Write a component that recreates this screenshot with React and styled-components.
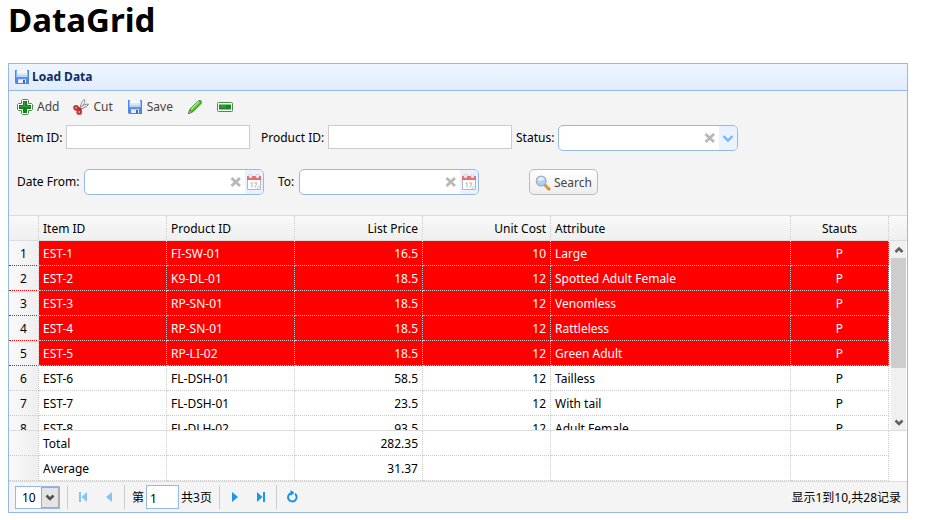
import React from "react";
import styled, { createGlobalStyle, css } from "styled-components";

const FONT = '"Noto Sans", "Noto Sans CJK SC", sans-serif';

const GlobalStyle = createGlobalStyle`
  * { box-sizing: border-box; }
  body {
    margin: 0 8px;
    background: #fff;
    color: #000;
    font: 12px/16px ${FONT};
  }
  button, input, select { font: inherit; color: inherit; }
`;

/* ---------- layout ---------- */

const Title = styled.h1`
  margin: 0 0 24px;
  font-size: 33px;
  line-height: 39px;
  font-weight: 700;
`;

const Panel = styled.section`
  max-width: 900px;
  border: 1px solid #95b8e7;
  background: #fff;
`;

const PanelHeader = styled.header`
  display: flex;
  align-items: center;
  gap: 2px;
  height: 27px;
  padding: 0 5px;
  border-bottom: 1px solid #95b8e7;
  background: linear-gradient(to bottom, #eff5ff 0%, #e0ecff 100%);
`;

const PanelTitle = styled.h2`
  margin: 0;
  font-size: 12px;
  line-height: 16px;
  font-weight: 700;
  color: #0e2d5f;
`;

const ToolArea = styled.div`
  height: 125px;
  padding: 4px 8px 0;
  background: #f4f4f4;
  border-bottom: 1px solid #ddd;
`;

const ButtonBar = styled.div`
  display: flex;
  align-items: center;
  gap: 14px;
  height: 24px;
  margin-bottom: 6px;
`;

const PlainButton = styled.button`
  display: inline-flex;
  align-items: center;
  gap: 4px;
  height: 24px;
  padding: 0;
  border: 0;
  background: none;
  color: #444;
  cursor: pointer;
`;

const FieldRow = styled.div`
  display: flex;
  align-items: center;
  height: 26px;
  margin-bottom: ${(p) => (p.$spaced ? "18px" : "0")};
`;

const Label = styled.label`
  flex: none;
  width: ${(p) => p.$width};
  margin-left: ${(p) => p.$gap || "0"};
  white-space: nowrap;
`;

const TextBox = styled.input`
  width: 184px;
  height: 24px;
  margin-bottom: 2px;
  padding: 2px 4px;
  border: 1px solid #ccc;
  background: #fff;
`;

const Combo = styled.div`
  display: flex;
  align-items: stretch;
  width: 180px;
  height: 26px;
  border: 1px solid #95b8e7;
  border-radius: 5px;
  background: #fff;
  overflow: hidden;
`;

const ComboInput = styled.input`
  flex: 1;
  min-width: 0;
  padding: 0 4px;
  border: 0;
  outline: 0;
  background: transparent;
`;

const ComboButton = styled.button`
  display: grid;
  place-items: center;
  width: 18px;
  padding: 0;
  border: 0;
  background: ${(p) => (p.$tinted ? "#e0ecff" : "transparent")};
  opacity: ${(p) => (p.$tinted ? 0.65 : 1)};
`;

const SearchButton = styled.button`
  display: inline-flex;
  align-items: center;
  gap: 3px;
  height: 26px;
  margin-left: 50px;
  padding: 1px 5px 0;
  border: 1px solid #bbb;
  border-radius: 5px;
  background: linear-gradient(to bottom, #fff 0%, #eee 100%);
  color: #444;
`;

/* ---------- grid ---------- */

const Split = styled.div`
  display: grid;
  grid-template-columns: minmax(0, 1fr) 18px;
`;

const HeadBand = styled(Split)`
  border-bottom: 1px solid #ddd;
  background: linear-gradient(to bottom, #f9f9f9 0%, #efefef 100%);
`;

const BodyBand = styled(Split)`
  height: 189px;
`;

const FootBand = styled(Split)`
  border-top: 1px solid #ddd;
`;

const Viewport = styled.div`
  overflow: hidden;
`;

const Table = styled.table`
  width: 100%;
  table-layout: fixed;
  border-collapse: separate;
  border-spacing: 0;
`;

const cell = css`
  height: ${(p) => (p.$head ? "24px" : "25px")};
  padding: 2px 4px 0;
  border-right: 1px dotted #ccc;
  text-align: ${(p) => p.$align || "left"};
  font-weight: 400;
  white-space: nowrap;
`;

const HeadCell = styled.th`
  ${cell}
`;

const Cell = styled.td`
  ${cell}
  border-bottom: 1px dotted #ccc;
`;

const NumberCell = styled.th`
  ${cell}
  padding: 2px 0 0;
  border-bottom: 1px dotted #ccc;
  background: linear-gradient(to right, #f9f9f9 0%, #efefef 100%);
`;

const Row = styled.tr`
  ${(p) =>
    p.$marked &&
    css`
      background: #f00;
      ${Cell} {
        color: #fff;
      }
      ${NumberCell} {
        border-bottom-color: #f00;
      }
    `}
`;

const ScrollBar = styled.div`
  display: flex;
  flex-direction: column;
  margin: 0 1px;
  border-left: 1px solid #fff;
  background: #f0f0f0;
`;

const ScrollButton = styled.button`
  display: grid;
  place-items: center;
  height: 17px;
  padding: 0;
  border: 0;
  background: none;
`;

const ScrollTrack = styled.div`
  flex: 1;
`;

const ScrollThumb = styled.div`
  height: 71%;
  background: #cdcdcd;
`;

/* ---------- pager ---------- */

const Pager = styled.footer`
  display: flex;
  align-items: center;
  height: 31px;
  padding: 0 6px;
  border-top: 1px solid #ddd;
  background: #f4f4f4;
`;

const SizeBox = styled.div`
  display: grid;
  grid-template-columns: 1fr 18px;
  width: 45px;
  height: 23px;
  margin-right: 5px;
  border: 1px solid #95b8e7;
  background: #fff;
`;

const SizeSelect = styled.select`
  grid-area: 1 / 1 / 2 / 3;
  width: 100%;
  padding: 2px 6px 0;
  border: 0;
  background: transparent;
  appearance: none;
`;

const SizeArrow = styled.span`
  grid-area: 1 / 2 / 2 / 3;
  display: grid;
  place-items: center;
  border: 1px solid #aaa;
  background: #e4e4e4;
  pointer-events: none;
`;

const Divider = styled.span`
  width: 1px;
  height: 24px;
  margin: 0 2px;
  background: #ccc;
`;

const PagerButton = styled.button`
  display: grid;
  place-items: center;
  width: 26px;
  height: 24px;
  padding: 0;
  border: 0;
  background: none;
  opacity: ${(p) => (p.disabled ? 0.5 : 1)};
`;

const PageGroup = styled.div`
  display: flex;
  align-items: center;
  padding: 0 5px;
`;

const PagerText = styled.span`
  padding-top: 2px;
`;

const PageInput = styled.input`
  width: 33px;
  height: 24px;
  margin: 0 2px;
  padding: 2px 3px 0;
  border: 1px solid #95b8e7;
  background: #fff;
`;

const PageInfo = styled(PagerText)`
  margin-left: auto;
`;

/* ---------- icons ---------- */

const Svg = styled.svg`
  display: block;
  flex: none;
`;

const Icon = ({ children, size = 16 }) => (
  <Svg width={size} height={size} viewBox="0 0 16 16" aria-hidden="true">
    {children}
  </Svg>
);

const SaveIcon = () => (
  <Icon>
    <path d="M1 1h14v14H2l-1-1z" fill="#4d86e6" />
    <path d="M2 2h1v6H2zM13 2h1v6h-1z" fill="#8fb8f8" />
    <path d="M3 1h10v3H3z" fill="#f4f8ff" />
    <path d="M3 4h10v2H3z" fill="#dce9fd" />
    <path d="M3 6h10v2H3z" fill="#bdd5fa" />
    <path d="M2 8h12v2H2z" fill="#5c93ee" />
    <path d="M4 10h8v4H4z" fill="#e9eef8" />
    <path d="M4 10h8v1H4z" fill="#c5d2ea" />
    <path d="M9 11h2v3H9z" fill="#3f66b5" />
  </Icon>
);

const AddIcon = () => (
  <Icon>
    <path
      d="M5.500.5h5l1 1v3h3l1 1v5l-1 1h-3v3l-1 1h-5l-1-1v-3h-3l-1-1v-5l1-1h3v-3z"
      fill="#fff"
      stroke="#4d8a52"
    />
    <path d="M6 2h4v4h4v4h-4v4H6v-4H2V6h4z" fill="#0c8517" />
    <path d="M7 3h1v4h5v1H3V7h4z" fill="#3ba342" />
  </Icon>
);

const CutIcon = () => (
  <Icon>
    <path d="M6.500 10L9 2.500 11.500.5l.3 2.500L8 10z" fill="#f3f3f3" stroke="#8c8c8c" strokeWidth=".9" />
    <path d="M6 9l5.500-3.500 4-.5-1.300 2L8 10.500z" fill="#e6e6e6" stroke="#808080" strokeWidth=".9" />
    <circle cx="3" cy="8.800" r="1.900" fill="#f4a0a0" stroke="#c92f2f" strokeWidth="1.900" />
    <circle cx="6.200" cy="13" r="1.900" fill="#f4a0a0" stroke="#c92f2f" strokeWidth="1.900" />
    <path d="M5 9.500l2.600.2-.6 2" fill="none" stroke="#a82a2a" strokeWidth="1.800" />
  </Icon>
);

const EditIcon = () => (
  <Icon>
    <path d="M1.500 14.500l1.600-4.400L11.300 2l2-.5 1 .9-.3 2.200-8.200 8.200z" fill="#55c42b" stroke="#257d20" />
    <path d="M4 10.500l8-8" stroke="#b4f08b" strokeWidth="1.300" />
    <path d="M1.500 14.500l1.200-3.100 2.200 1.900z" fill="#f4f0d8" stroke="#426f32" strokeWidth=".7" />
  </Icon>
);

const RemoveIcon = () => (
  <Icon>
    <rect x=".5" y="3.500" width="15" height="9" rx="1" fill="#fff" stroke="#4d8a52" />
    <path d="M2 5.500h12v5H2z" fill="#128a19" />
    <path d="M3 6h6v3H3z" fill="#2b9c33" />
  </Icon>
);

const SearchIcon = () => (
  <Icon>
    <path d="M10 10l4 4" stroke="#d58525" strokeWidth="3" strokeLinecap="round" />
    <path d="M10 9.500l4 4" stroke="#f8bd66" strokeWidth="1" />
    <circle cx="6.200" cy="6" r="4.800" fill="#a9d4fa" stroke="#a8afb8" strokeWidth="1.400" />
    <path d="M2.800 6a3.400 3.400 0 0 1 6.800-1.200C7.500 4.500 5 7 2.800 6z" fill="#ddf0ff" />
  </Icon>
);

const ClearIcon = () => (
  <Icon>
    <path d="M3.500 4l8.500 8M12 4l-8.500 8" stroke="#b8b8b8" strokeWidth="2.800" />
  </Icon>
);

const CalendarIcon = () => (
  <Icon>
    <path d="M1.500 2.500h13v13h-13z" fill="#fff" stroke="#968c90" />
    <path d="M1 2h14v4H1z" fill="#dc1d22" />
    <rect x="3" y="0" width="3" height="4" rx="1" fill="#eee" stroke="#a88" strokeWidth=".6" />
    <rect x="10" y="0" width="3" height="4" rx="1" fill="#eee" stroke="#a88" strokeWidth=".6" />
    <path d="M4.500 9.500l1.500-1v5M8 9h3L9 13.500" fill="none" stroke="#909090" />
    <path d="M11 15c0-2.500 1.500-3.500 4-3.500L11.500 15z" fill="#e2dde1" stroke="#b0a8ac" strokeWidth=".6" />
  </Icon>
);

const ChevronIcon = ({ up, color }) => (
  <Icon>
    <path
      d={up ? "M4.500 10L8 6.500l3.500 3.500" : "M4.500 6.500L8 10l3.500-3.500"}
      fill="none"
      stroke={color}
      strokeWidth="2.600"
    />
  </Icon>
);

const ComboArrowIcon = () => (
  <Icon>
    <path d="M3.500 6L8 10.500 12.500 6" fill="none" stroke="#2196f3" strokeWidth="2.400" />
  </Icon>
);

const FirstIcon = () => (
  <Icon>
    <path d="M4 3h2v10H4zM12 3v10L6.500 8z" fill="#1a96f0" />
  </Icon>
);
const PrevIcon = () => (
  <Icon>
    <path d="M11 3v10L5 8z" fill="#1a96f0" />
  </Icon>
);
const NextIcon = () => (
  <Icon>
    <path d="M5 3v10l6-5z" fill="#1a96f0" />
  </Icon>
);
const LastIcon = () => (
  <Icon>
    <path d="M4 3v10l5.500-5zM10 3h2v10h-2z" fill="#1a96f0" />
  </Icon>
);
const RefreshIcon = () => (
  <Icon>
    <path d="M11 4.800A4.300 4.300 0 1 1 7 4.100" fill="none" stroke="#1a8fe6" strokeWidth="1.900" />
    <path d="M6.500 1v6l4-3.200z" fill="#1a8fe6" />
  </Icon>
);

/* ---------- data ---------- */

const columns = [
  { key: "item", title: "Item ID", width: 128 },
  { key: "product", title: "Product ID", width: 128 },
  { key: "price", title: "List Price", width: 128, align: "right" },
  { key: "cost", title: "Unit Cost", width: 128, align: "right" },
  { key: "attr", title: "Attribute" },
  { key: "status", title: "Stauts", width: 98, align: "center" },
];

const rows = [
  { item: "EST-1", product: "FI-SW-01", price: 16.5, cost: 10, attr: "Large", status: "P" },
  { item: "EST-2", product: "K9-DL-01", price: 18.5, cost: 12, attr: "Spotted Adult Female", status: "P" },
  { item: "EST-3", product: "RP-SN-01", price: 18.5, cost: 12, attr: "Venomless", status: "P" },
  { item: "EST-4", product: "RP-SN-01", price: 18.5, cost: 12, attr: "Rattleless", status: "P" },
  { item: "EST-5", product: "RP-LI-02", price: 18.5, cost: 12, attr: "Green Adult", status: "P" },
  { item: "EST-6", product: "FL-DSH-01", price: 58.5, cost: 12, attr: "Tailless", status: "P" },
  { item: "EST-7", product: "FL-DSH-01", price: 23.5, cost: 12, attr: "With tail", status: "P" },
  { item: "EST-8", product: "FL-DLH-02", price: 93.5, cost: 12, attr: "Adult Female", status: "P" },
];

const totals = [
  { item: "Total", price: 282.35 },
  { item: "Average", price: 31.37 },
];

const Columns = () => (
  <colgroup>
    <col width="30" />
    {columns.map((c) => (
      <col key={c.key} width={c.width} />
    ))}
  </colgroup>
);

const DataRow = ({ row, number, marked }) => (
  <Row $marked={marked}>
    <NumberCell $align="center" scope="row">
      {number}
    </NumberCell>
    {columns.map((c) => (
      <Cell key={c.key} $align={c.align}>
        {row[c.key]}
      </Cell>
    ))}
  </Row>
);

const ClearableField = ({ id, children }) => (
  <Combo>
    <ComboInput id={id} type="text" />
    <ComboButton type="button" aria-label="Clear">
      <ClearIcon />
    </ComboButton>
    {children}
  </Combo>
);

const DateField = ({ id }) => (
  <ClearableField id={id}>
    <ComboButton type="button" $tinted aria-label="Open calendar">
      <CalendarIcon />
    </ComboButton>
  </ClearableField>
);

export default function App() {
  return (
    <>
      <GlobalStyle />
      <Title>DataGrid</Title>
      <Panel>
        <PanelHeader>
          <SaveIcon />
          <PanelTitle>Load Data</PanelTitle>
        </PanelHeader>

        <ToolArea>
          <ButtonBar>
            <PlainButton type="button"><AddIcon />Add</PlainButton>
            <PlainButton type="button"><CutIcon />Cut</PlainButton>
            <PlainButton type="button"><SaveIcon />Save</PlainButton>
            <PlainButton type="button" aria-label="Edit"><EditIcon /></PlainButton>
            <PlainButton type="button" aria-label="Remove"><RemoveIcon /></PlainButton>
          </ButtonBar>
          <FieldRow $spaced>
            <Label htmlFor="item" $width="49px">Item ID:</Label>
            <TextBox id="item" type="text" />
            <Label htmlFor="product" $width="67px" $gap="11px">Product ID:</Label>
            <TextBox id="product" type="text" />
            <Label htmlFor="status" $width="42px" $gap="4px">Status:</Label>
            <ClearableField id="status">
              <ComboButton type="button" $tinted aria-label="Open list">
                <ComboArrowIcon />
              </ComboButton>
            </ClearableField>
          </FieldRow>
          <FieldRow>
            <Label htmlFor="from" $width="67px">Date From:</Label>
            <DateField id="from" />
            <Label htmlFor="to" $width="21px" $gap="14px">To:</Label>
            <DateField id="to" />
            <SearchButton type="button"><SearchIcon />Search</SearchButton>
          </FieldRow>
        </ToolArea>

        <HeadBand>
          <Table>
            <Columns />
            <thead>
              <tr>
                <HeadCell $head />
                {columns.map((c) => (
                  <HeadCell key={c.key} $head $align={c.align} scope="col">{c.title}</HeadCell>
                ))}
              </tr>
            </thead>
          </Table>
        </HeadBand>
        <BodyBand>
          <Viewport>
            <Table>
              <Columns />
              <tbody>
                {rows.map((row, i) => (
                  <DataRow key={row.item} row={row} number={i + 1} marked={row.price < 20} />
                ))}
              </tbody>
            </Table>
          </Viewport>
          <ScrollBar>
            <ScrollButton type="button" aria-label="Scroll up"><ChevronIcon up color="#606060" /></ScrollButton>
            <ScrollTrack><ScrollThumb /></ScrollTrack>
            <ScrollButton type="button" aria-label="Scroll down"><ChevronIcon color="#606060" /></ScrollButton>
          </ScrollBar>
        </BodyBand>
        <FootBand>
          <Table>
            <Columns />
            <tbody>
              {totals.map((row) => (
                <DataRow key={row.item} row={row} />
              ))}
            </tbody>
          </Table>
        </FootBand>

        <Pager>
          <SizeBox>
            <SizeSelect aria-label="Page size" defaultValue="10">
              <option>10</option>
              <option>20</option>
              <option>50</option>
            </SizeSelect>
            <SizeArrow><ChevronIcon color="#505050" /></SizeArrow>
          </SizeBox>
          <Divider />
          <PagerButton type="button" disabled aria-label="First page"><FirstIcon /></PagerButton>
          <PagerButton type="button" disabled aria-label="Previous page"><PrevIcon /></PagerButton>
          <Divider />
          <PageGroup>
            <PagerText as="label" htmlFor="page">第</PagerText>
            <PageInput id="page" type="text" defaultValue="1" />
            <PagerText>共3页</PagerText>
          </PageGroup>
          <Divider />
          <PagerButton type="button" aria-label="Next page"><NextIcon /></PagerButton>
          <PagerButton type="button" aria-label="Last page"><LastIcon /></PagerButton>
          <Divider />
          <PagerButton type="button" aria-label="Refresh"><RefreshIcon /></PagerButton>
          <PageInfo>显示1到10,共28记录</PageInfo>
        </Pager>
      </Panel>
    </>
  );
}
